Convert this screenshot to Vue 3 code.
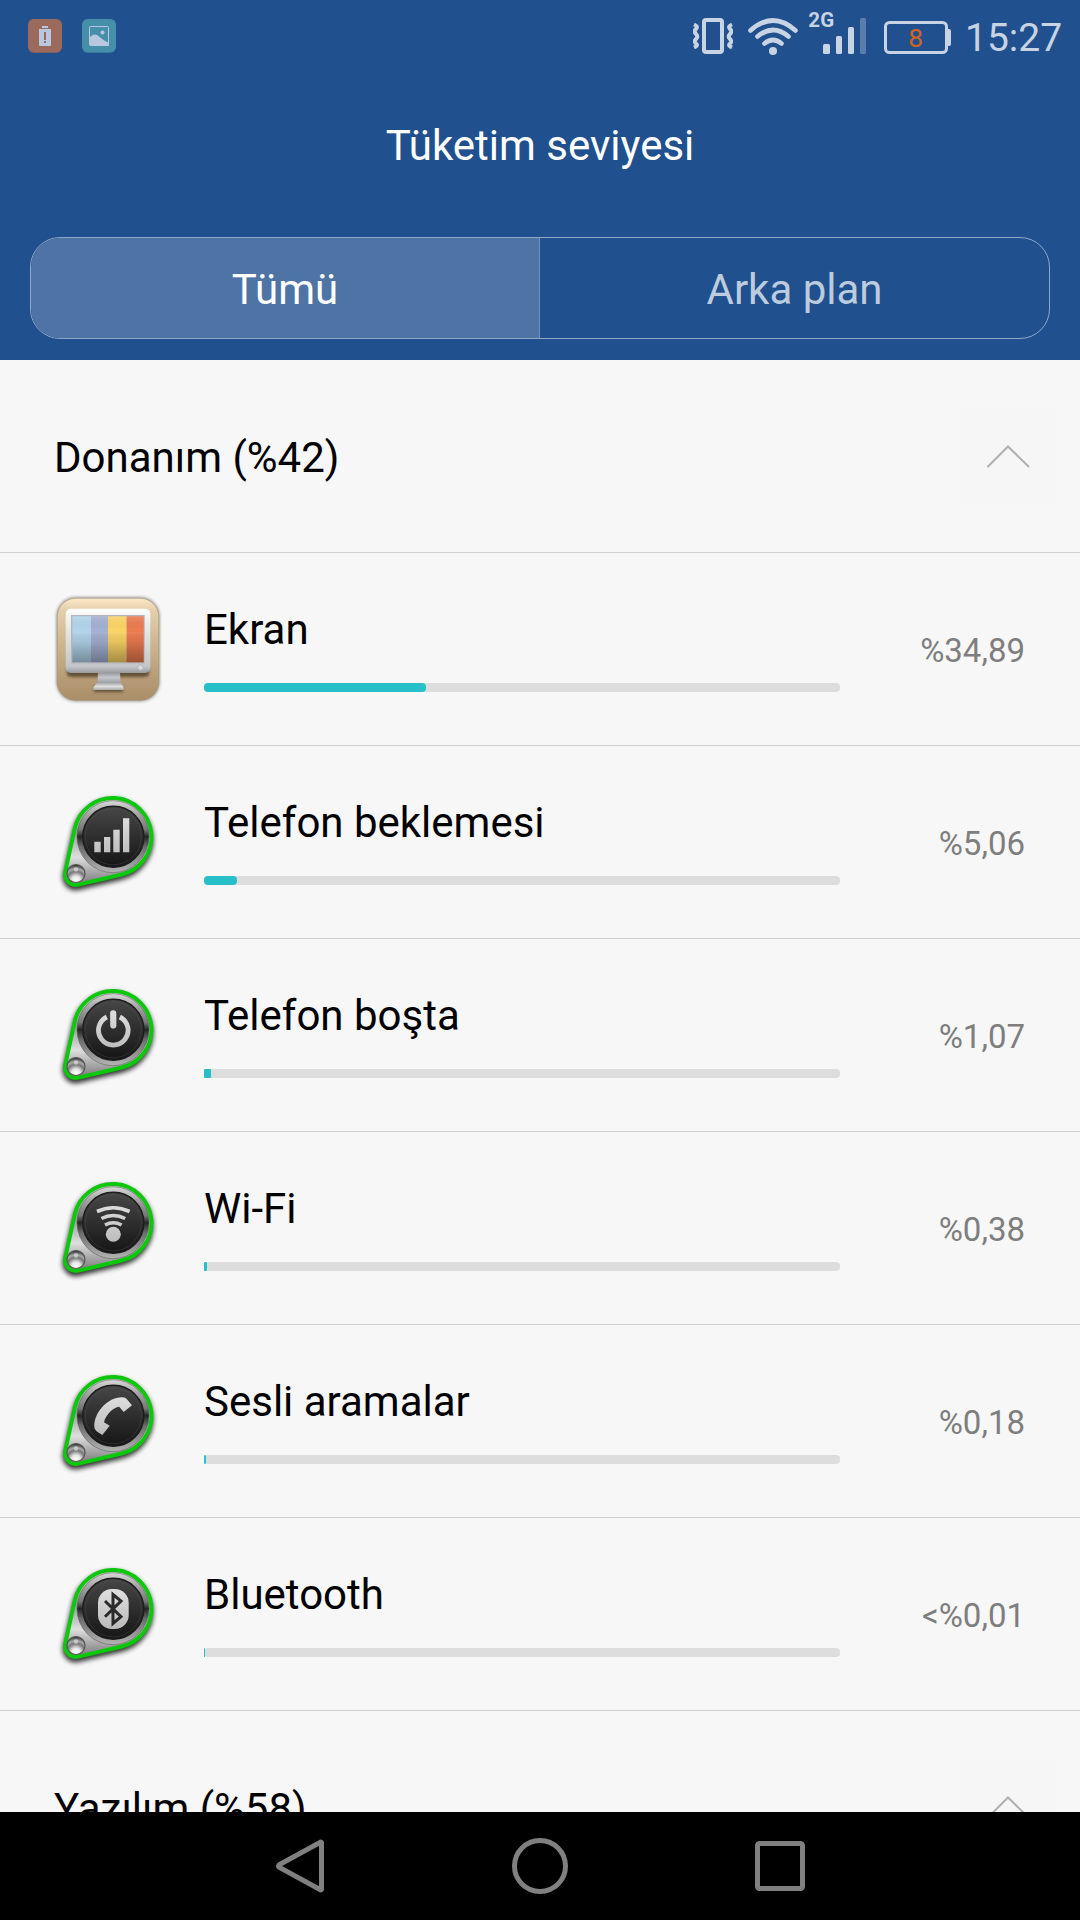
<template>
    <div class="screen">
        <header>
            <div class="status_bar">
                <div class="notifications">
                    <svg width="34" height="34" viewBox="0 0 34 34">
                        <rect width="34" height="34" rx="6" fill="#855f5c" />
                        <rect width="34" height="33" rx="6" fill="#9b6a5d" />
                        <path d="M14 7h6v2h-6z M11 10h12v16a1 1 0 0 1-1 1H12a1 1 0 0 1-1-1z" fill="#b9c8de" />
                        <path d="M16 13h2v8h-2z M16 22h2v2h-2z" fill="#9b6a5d" />
                    </svg>
                    <svg width="34" height="34" viewBox="0 0 34 34">
                        <rect width="34" height="34" rx="6" fill="#397b99" />
                        <rect width="34" height="33" rx="6" fill="#4590a8" />
                        <rect x="7.500" y="7.500" width="19" height="19" rx="1" fill="none" stroke="#b9c8de" />
                        <circle cx="20.500" cy="13.500" r="2" fill="#b9c8de" />
                        <path d="M8 18q5-4.500 9-.5 4 3.500 8 5.500h2v3a1 1 0 0 1-1 1H8z" fill="#b9c8de" />
                    </svg>
                </div>

                <div class="indicators">
                    <svg width="40" height="72" viewBox="693 0 40 72" fill="none" stroke="#c8d3e4">
                        <rect x="704" y="20" width="18" height="32" rx="2" stroke-width="4" />
                        <path d="M694 24.500q4.500 2 2 4.500t0 5 0 5 0 4.500-2 4M732 24.500q-4.500 2-2 4.500t0 5 0 5 0 4.500 2 4" stroke-width="4" />
                    </svg>
                    <svg class="wifi" width="50" height="72" viewBox="748 0 50 72" fill="none" stroke="#c8d3e4" stroke-width="4.600" stroke-linecap="round">
                        <path d="M750.500 30.500Q773 10.500 795.500 30.500M757.500 36.500Q773 23.500 788.500 36.500M764.500 43.500Q773 36.500 781.500 43.500" />
                        <circle cx="773" cy="51" r="4" fill="#c8d3e4" stroke="none" />
                    </svg>
                    <svg class="signal" width="57" height="72" viewBox="809 0 57 72" fill="#c8d3e4">
                        <text x="808.300" y="27" textLength="26" font-family="Roboto, sans-serif" font-size="20.500" font-weight="700">2G</text>
                        <rect x="823" y="44" width="7" height="10" rx="1.500" />
                        <rect x="836" y="36" width="6" height="18" rx="1.500" />
                        <rect x="848" y="27" width="6" height="27" rx="1.500" />
                        <rect x="860" y="18" width="6" height="36" rx="1.500" opacity=".35" />
                    </svg>
                    <svg class="battery" width="67" height="72" viewBox="884 0 67 72">
                        <rect x="885.500" y="22.500" width="61" height="30" rx="4" fill="none" stroke="#c8d3e4" stroke-width="3" />
                        <path d="M947 29h2q2 0 2 2v13q0 2-2 2h-2z" fill="#c8d3e4" />
                        <text x="915.700" y="47" text-anchor="middle" font-family="Roboto, sans-serif" font-size="26.500" fill="#d2641e">8</text>
                    </svg>
                    <span class="clock">15:27</span>
                </div>
            </div>

            <h1>Tüketim seviyesi</h1>

            <div class="tabs">
                <button :class="{ active: tab === 'all' }" @click="tab = 'all'">Tümü</button>
                <button :class="{ active: tab === 'background' }" @click="tab = 'background'">Arka plan</button>
            </div>
        </header>

        <main>
            <div class="section_head">
                <span>Donanım (%42)</span>
                <svg class="chevron" width="96" height="96" viewBox="0 0 96 96">
                    <path d="M28 58.500 48 38.500 68.500 58.500" />
                </svg>
            </div>

            <div v-for="item in hardware" :key="item.icon" class="item">
                <svg v-if="item.icon === 'screen'" class="icon" viewBox="0 0 104 104">
                    <defs>
                        <linearGradient id="tan" x1="0" y1="0" x2="0" y2="1">
                            <stop offset="0" stop-color="#fbe9c6" />
                            <stop offset=".12" stop-color="#e5cfab" />
                            <stop offset=".5" stop-color="#cab18b" />
                            <stop offset="1" stop-color="#a98e68" />
                        </linearGradient>
                        <linearGradient id="frame" x1="0" y1="0" x2="0" y2="1">
                            <stop offset="0" stop-color="#fff" />
                            <stop offset=".15" stop-color="#f1f1f3" />
                            <stop offset=".9" stop-color="#c4c5c8" />
                            <stop offset="1" stop-color="#999a9e" />
                        </linearGradient>
                        <linearGradient id="shade" x1="0" y1="0" x2="0" y2="1">
                            <stop offset="0" stop-color="#fff" stop-opacity=".12" />
                            <stop offset=".3" stop-color="#000" stop-opacity="0" />
                            <stop offset="1" stop-color="#000" stop-opacity=".24" />
                        </linearGradient>
                        <linearGradient id="stand" x1="0" y1="0" x2="0" y2="1">
                            <stop offset="0" stop-color="#909195" />
                            <stop offset=".3" stop-color="#c6c7ca" />
                            <stop offset=".58" stop-color="#a2a3a7" />
                            <stop offset=".8" stop-color="#e0e0e2" />
                            <stop offset="1" stop-color="#aaa" />
                        </linearGradient>
                        <filter id="soft" x="-20%" y="-20%" width="140%" height="140%">
                            <feGaussianBlur stdDeviation="1.400" />
                        </filter>
                    </defs>
                    <rect x=".2" y="0" width="103.600" height="104.600" rx="19.500" fill="#a09c96" filter="url(#soft)" />
                    <rect x="1.200" y="1.300" width="101.600" height="102" rx="18.500" fill="url(#tan)" stroke="#9c8c74" stroke-opacity=".5" />
                    <path d="M11 70h82v7q0 3-5 3H16q-5 0-5-3zM38 90h29v5H38z" fill="#4e3c22" opacity=".8" filter="url(#soft)" />
                    <path d="M42 75h22l.5 10L68 91q0 2-1.500 2h-28q-1.500 0-1.500-2l4.500-6z" fill="url(#stand)" />
                    <rect x="9.700" y="11.700" width="84.600" height="64.300" rx="5" fill="url(#frame)" />
                    <rect x="15" y="18" width="73.700" height="48.500" fill="#b4b5bb" />
                    <rect x="16.300" y="19.300" width="18.700" height="46" fill="#b3d5eb" />
                    <rect x="35" y="19.300" width="17" height="46" fill="#a5b1d4" />
                    <rect x="52" y="19.300" width="18.700" height="46" fill="#fcd566" />
                    <rect x="70.700" y="19.300" width="17" height="46" fill="#ed7c50" />
                    <rect x="16.300" y="19.300" width="71.400" height="46" fill="url(#shade)" />
                    <rect x="16.300" y="35" width="71.400" height="30.300" fill="url(#shade)" opacity=".55" />
                    <circle cx="84.500" cy="70.500" r="2.800" fill="#d7d8da" stroke="#aaa" stroke-width=".8" />
                </svg>

                <svg v-else class="icon" viewBox="0 0 104 104">
                    <defs>
                        <linearGradient id="plate" x1="0" y1="0" x2="0" y2="1">
                            <stop offset="0" stop-color="#d4d4d4" />
                            <stop offset=".4" stop-color="#999" />
                            <stop offset=".68" stop-color="#dedede" />
                            <stop offset="1" stop-color="#777" />
                        </linearGradient>
                        <linearGradient id="ring" x1="0" y1="0" x2="0" y2="1">
                            <stop offset="0" stop-color="#d8d8d8" />
                            <stop offset=".2" stop-color="#a2a2a2" />
                            <stop offset=".4" stop-color="#777" />
                            <stop offset=".5" stop-color="#242424" />
                            <stop offset=".64" stop-color="#6d6d6d" />
                            <stop offset="1" stop-color="#b4b4b4" />
                        </linearGradient>
                        <linearGradient id="disc" x1="0" y1="0" x2="0" y2="1">
                            <stop offset="0" stop-color="#474747" />
                            <stop offset="1" stop-color="#151515" />
                        </linearGradient>
                        <linearGradient id="glyph" gradientUnits="userSpaceOnUse" x1="0" y1="28" x2="0" y2="66">
                            <stop offset="0" stop-color="#dedede" />
                            <stop offset="1" stop-color="#bcbcbc" />
                        </linearGradient>
                        <radialGradient id="rivet" cx=".5" cy=".9" r=".85">
                            <stop offset="0" stop-color="#fff" />
                            <stop offset=".3" stop-color="#e6e6e6" />
                            <stop offset=".6" stop-color="#777" />
                            <stop offset=".78" stop-color="#aaa" />
                            <stop offset="1" stop-color="#3c3c3c" />
                        </radialGradient>
                        <filter id="drop" x="-20%" y="-20%" width="140%" height="140%">
                            <feGaussianBlur stdDeviation="2.400" />
                        </filter>
                    </defs>
                    <path :d="drop" fill="#000" stroke="#000" stroke-width="4.500" opacity=".8" filter="url(#drop)" transform="translate(-.3 3)" />
                    <path :d="drop" fill="url(#plate)" stroke="#0bc80b" stroke-width="3.900" />
                    <circle cx="57" cy="46.700" r="36" fill="url(#ring)" stroke="#555" stroke-opacity=".5" />
                    <circle cx="57.300" cy="46.800" r="30.500" fill="url(#disc)" stroke="#1d1d1d" stroke-width="1.400" />
                    <circle cx="57.300" cy="46.800" r="28" fill="none" stroke="#555" stroke-opacity=".35" />
                    <circle cx="20" cy="83.500" r="9" fill="url(#rivet)" stroke="#555" stroke-width="1.200" />
                    <circle cx="20" cy="79.500" r="2.200" fill="#ddd" opacity=".7" />

                    <path v-if="item.icon === 'signal'" d="M38.300 51.700h6.400v10.600h-6.400zM48 47h6.300v15.300H48zM57.300 39.700h6.400v22.600h-6.400zM67 28.300h6.300v34H67z" fill="url(#glyph)" />
                    <g v-if="item.icon === 'power'" fill="none" stroke="url(#glyph)">
                        <path d="M50.800 34A14.800 14.800 0 1 0 63.800 34" stroke-width="4.800" />
                        <path d="M57.200 30.400 57.300 42.400" stroke-width="6.200" stroke-linecap="round" />
                    </g>
                    <g v-if="item.icon === 'wifi'" fill="none" stroke="url(#glyph)" stroke-width="3.600">
                        <path d="M41 35.500Q57.300 28 73.600 35.500M45.400 42.500Q57.300 36.500 69.200 42.500M49 49Q57.300 44.500 65.600 49" />
                        <circle cx="57.300" cy="58.300" r="7.500" fill="url(#glyph)" stroke="none" />
                    </g>
                    <path v-if="item.icon === 'call'" d="M38.300 57.700C38 43 52 28.500 65.700 28.300q3.500-.3 5 1.700l5.300 6.300-8.300 6.700-4.500-5.300C57 38.500 49.500 46 48 53.300l5.700 3.400-7.400 9.300-5.800-3.800q-2.200-1.500-2.200-4.500z" fill="url(#glyph)" />
                    <g v-if="item.icon === 'bluetooth'">
                        <rect x="42" y="27" width="30.700" height="40" rx="14" fill="url(#glyph)" />
                        <path d="M49 39 65 54.700 57 61.500V32.500L65 39 49 54.700" fill="none" stroke="#2b2b2b" stroke-width="3" />
                    </g>
                </svg>

                <div class="usage">
                    <span>{{ item.name }}</span>
                    <div class="track">
                        <div class="fill" :class="{ narrow: item.width < 10 }" :style="{ width: item.width + 'px' }"></div>
                    </div>
                </div>
                <span class="percent">{{ item.percent }}</span>
            </div>

            <div class="section_head">
                <span>Yazılım (%58)</span>
                <svg class="chevron" width="96" height="96" viewBox="0 0 96 96">
                    <path d="M28 58.500 48 38.500 68.500 58.500" />
                </svg>
            </div>
        </main>

        <nav>
            <svg width="60" height="60" viewBox="0 0 60 60">
                <path d="M51.500 6.500v47q-.5 1-1.500 0L9.500 31.500q-2-1.500 0-3L50 6.500q1-1 1.500 0z" />
            </svg>
            <svg width="60" height="60" viewBox="0 0 60 60">
                <circle cx="30" cy="30" r="25.500" />
            </svg>
            <svg width="60" height="60" viewBox="0 0 60 60">
                <rect x="7.500" y="7.500" width="45" height="45" rx="2" />
            </svg>
        </nav>
    </div>
</template>

<script setup>
    import { ref } from 'vue';

    const tab = ref('all')

    // outline shared by all the round hardware icons
    const drop = 'M18.8 38.4A38.8 38.8 0 1 1 65.7 84.5L22.5 94.7A11 11 0 0 1 9.3 81.6Z'

    const hardware = [
        { icon: 'screen', name: 'Ekran', percent: '%34,89', width: 222 },
        { icon: 'signal', name: 'Telefon beklemesi', percent: '%5,06', width: 33 },
        { icon: 'power', name: 'Telefon boşta', percent: '%1,07', width: 7 },
        { icon: 'wifi', name: 'Wi-Fi', percent: '%0,38', width: 3 },
        { icon: 'call', name: 'Sesli aramalar', percent: '%0,18', width: 2 },
        { icon: 'bluetooth', name: 'Bluetooth', percent: '<%0,01', width: 1 }
    ]
</script>

<style>
    body {
        margin: 0;
        background-color: #000;
    }
</style>

<style scoped>
    .screen {
        width: 1080px;
        height: 1920px;
        display: flex;
        flex-flow: column;
        overflow: hidden;
        background-color: #f7f7f7;
        color: #000;
        font-family: Roboto, "Noto Sans", sans-serif;
        font-size: 42px;
    }

    header {
        height: 360px;
        flex: none;
        background-color: #20508e;
        color: white;
    }

    .status_bar {
        height: 72px;
        display: flex;
        justify-content: space-between;
        padding: 0 18px 0 28px;
    }

    .notifications {
        display: flex;
        align-items: center;
        gap: 20px;
    }

    .indicators {
        display: flex;
        color: #c8d3e4;
    }

    .wifi {
        margin-left: 15px;
    }

    .signal {
        margin-left: 11px;
    }

    .battery {
        margin-left: 18px;
    }

    .clock {
        width: 97px;
        margin-left: 14px;
        font-size: 39px;
        line-height: 77px;
        white-space: nowrap;
    }

    h1 {
        margin: 0;
        height: 165px;
        line-height: 147px;
        font-size: 42px;
        font-weight: 400;
        text-align: center;
    }

    .tabs {
        display: flex;
        box-sizing: border-box;
        height: 102px;
        margin: 0 30px;
        border: 1px solid #90a8c7;
        border-radius: 30px;
        overflow: hidden;

        > button {
            box-sizing: border-box;
            width: 508px;
            padding: 0;
            border: none;
            background: none;
            color: #bccbdd;
            font: inherit;
            line-height: 104px;
            cursor: pointer;
        }

        > button + button {
            flex: 1;
            border-left: 1px solid #7590b7;
        }

        > .active {
            background-color: #4e73a5;
            color: white;
        }
    }

    main {
        flex: 1;
        min-height: 0;
        overflow: hidden;
    }

    .section_head {
        display: flex;
        align-items: center;
        justify-content: space-between;
        height: 192px;
        padding: 0 24px 0 54px;
        border-bottom: 1px solid #d0d0d0;

        > span {
            padding-top: 2px;
        }
    }

    .chevron {
        background-color: #f6f6f6;

        > path {
            fill: none;
            stroke: #b0b0b0;
            stroke-width: 2;
            stroke-linecap: round;
        }
    }

    .item {
        display: flex;
        align-items: center;
        height: 192px;
        padding: 0 55px 0 56px;
        border-bottom: 1px solid #d0d0d0;
    }

    .icon {
        width: 104px;
        height: 104px;
        overflow: visible;
    }

    .usage {
        width: 636px;
        margin-left: 44px;
        padding-bottom: 2px;

        > span {
            display: block;
            line-height: 50px;
        }
    }

    .track {
        height: 9px;
        margin-top: 28px;
        border-radius: 4px;
        background-color: #ddd;
    }

    .fill {
        height: 9px;
        border-radius: 4px;
        background-color: #28c0c8;
    }

    .narrow {
        border-radius: 1px;
    }

    .percent {
        flex: 1;
        padding-top: 2px;
        text-align: right;
        font-size: 33px;
        color: #7e7e7e;
    }

    nav {
        flex: none;
        display: flex;
        justify-content: center;
        align-items: center;
        gap: 180px;
        height: 108px;
        background-color: #000;

        > svg {
            fill: none;
            stroke: #808080;
            stroke-width: 5;
        }
    }
</style>
